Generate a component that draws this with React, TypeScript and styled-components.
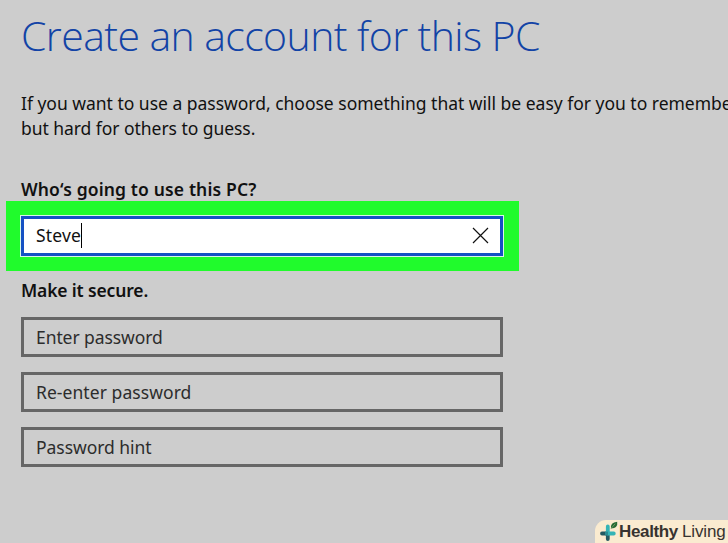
import React from "react";
import styled, { createGlobalStyle } from "styled-components";

const GlobalStyle = createGlobalStyle`
  * { box-sizing: border-box; }
  body { margin: 0; background: #cdcdcd; }
`;

const Page = styled.main`
  display: flex;
  flex-direction: column;
  width: 728px;
  height: 543px;
  overflow: hidden;
  background: #cdcdcd;
  color: #111;
  font-family: "Noto Sans", "Open Sans", sans-serif;
  white-space: nowrap;
`;

const Title = styled.h1`
  margin: 6px 0 0 21px;
  height: 60px;
  font-family: "Open Sans", "Noto Sans", sans-serif;
  font-size: 41px;
  font-weight: 300;
  line-height: 58px;
  letter-spacing: -0.59px;
  color: #1243a6;
`;

const Intro = styled.p`
  margin: 25px 0 0 21px;
  height: 50px;
  font-size: 17.5px;
  line-height: 25px;
`;

const IntroLine = styled.span<{ $spacing: number }>`
  display: block;
  letter-spacing: ${(p) => p.$spacing}px;
`;

const Label = styled.h2<{ $top: number; $spacing: number }>`
  margin: ${(p) => p.$top}px 0 0 21px;
  height: 24px;
  font-size: 17.5px;
  font-weight: 600;
  line-height: 24px;
  letter-spacing: ${(p) => p.$spacing}px;
`;

const Highlight = styled.div`
  width: 513px;
  height: 70px;
  margin: 0 0 0 6px;
  padding: 14px 15px 14px 14px;
  background: #20fb2c;
`;

const ActiveField = styled.div`
  display: flex;
  align-items: center;
  height: 40px;
  margin: 1px;
  padding: 0 11px 2px 12px;
  border: 3px solid #1551c4;
  background: #fff;
  outline: 1px solid #d8f6e8;
`;

const FieldText = styled.span<{ $spacing: number }>`
  font-size: 17.5px;
  letter-spacing: ${(p) => p.$spacing}px;
  line-height: 24px;
`;

const Caret = styled.span`
  width: 1px;
  height: 25px;
  background: #000;
`;

const Clear = styled.svg`
  width: 17px;
  height: 17px;
  margin-left: auto;
`;

const Fields = styled.div`
  display: flex;
  flex-direction: column;
  gap: 15px;
  margin: 15px 0 0 21px;
`;

const Field = styled.div`
  display: flex;
  align-items: center;
  width: 482px;
  height: 40px;
  padding-left: 12px;
  border: 3px solid #666;
  color: #2c2c2c;
`;

const Brand = styled.footer`
  display: flex;
  align-items: center;
  align-self: flex-end;
  width: 133px;
  height: 23px;
  margin-top: auto;
  padding-left: 4px;
  border-radius: 11px 0 0 0;
  background: #faebd0;
  color: #37332f;
  font-family: "Liberation Sans", sans-serif;
  font-size: 17px;
`;

const BrandIcon = styled.svg`
  flex: none;
  width: 20px;
  height: 22px;
`;

const BrandText = styled.span<{ $bold?: boolean; $gap?: number }>`
  margin-left: ${(p) => p.$gap ?? 0}px;
  font-weight: ${(p) => (p.$bold ? 700 : 400)};
  letter-spacing: ${(p) => (p.$bold ? -0.35 : -0.15)}px;
`;

const passwordFields = [
  { text: "Enter password", spacing: -0.08 },
  { text: "Re-enter password", spacing: 0.06 },
  { text: "Password hint", spacing: -0.04 },
];

export default function App() {
  return (
    <>
      <GlobalStyle />
      <Page>
        <Title>Create an account for this PC</Title>
        <Intro>
          <IntroLine $spacing={-0.015}>
            If you want to use a password, choose something that will be easy for you to remember
          </IntroLine>
          <IntroLine $spacing={-0.05}>but hard for others to guess.</IntroLine>
        </Intro>
        <Label $top={36} $spacing={0.14}>Who‘s going to use this PC?</Label>
        <Highlight>
          <ActiveField>
            <FieldText $spacing={0.15}>Steve</FieldText>
            <Caret />
            <Clear viewBox="0 0 17 17" fill="none" stroke="#111" strokeWidth="1.2">
              <path d="M1 1L16 16M16 1L1 16" />
            </Clear>
          </ActiveField>
        </Highlight>
        <Label $top={7} $spacing={-0.15}>Make it secure.</Label>
        <Fields>
          {passwordFields.map((f) => (
            <Field key={f.text}>
              <FieldText $spacing={f.spacing}>{f.text}</FieldText>
            </Field>
          ))}
        </Fields>
        <Brand>
          <BrandIcon viewBox="0 0 20 22" fill="none" strokeLinecap="round" strokeWidth="3.8">
            <path d="M8.8 12.5v5.5M3 12.5h4" stroke="#245a62" />
            <path d="M8.8 5.5v7h6" stroke="#35b4b6" strokeLinejoin="round" />
            <path d="M6 12.5h3" stroke="#2b8b90" strokeLinecap="butt" />
            <path d="M12 7.5q-1-6 6.2-6.8q1 6.4-6.2 6.8z" fill="#256b35" />
            <path d="M12 7.5l4-4.5" stroke="#8fae79" strokeWidth="0.7" />
          </BrandIcon>
          <BrandText $bold>Healthy</BrandText>
          <BrandText $gap={4}>Living</BrandText>
        </Brand>
      </Page>
    </>
  );
}
